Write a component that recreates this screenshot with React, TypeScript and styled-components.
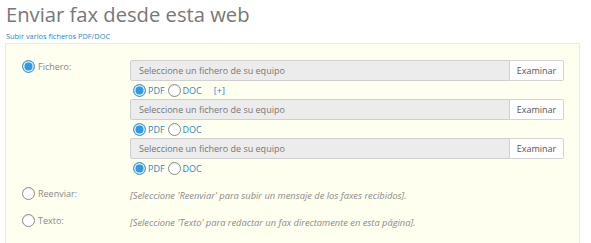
import React from "react";
import styled, { createGlobalStyle } from "styled-components";

const GlobalStyle = createGlobalStyle`
  body {
    margin: 0;
    background: #fff;
    font-family: "Open Sans", "DejaVu Sans", sans-serif;
    overflow: hidden;
  }
`;

const Page = styled.div`
  width: 591px;
  height: 243px;
  overflow: hidden;
`;

const Title = styled.h1`
  margin: 0;
  padding: 0 0 0 6px;
  height: 30px;
  font-size: 20.2px;
  font-weight: 400;
  line-height: 28px;
  color: #777;
`;

const SubLink = styled.a`
  display: block;
  margin-left: 6px;
  height: 12px;
  font-size: 7.4px;
  line-height: 12px;
  color: #1e88c9;
  text-decoration: none;
`;

const Panel = styled.div`
  margin: 1px 0 0 5px;
  width: 575px;
  height: 220px;
  border: 1px solid #ececdc;
  background: #fffff0;
  padding: 16px 0 0 16px;
  box-sizing: border-box;
`;

const OptionRow = styled.div<{ $height?: number }>`
  display: grid;
  grid-template-columns: 108px 434px;
  min-height: ${(p) => p.$height ?? 27}px;
`;

const OptionLabel = styled.label`
  display: flex;
  align-items: flex-start;
  gap: 3px;
  font-size: 9px;
  line-height: 14px;
  color: #888;
`;

const Radio = styled.span<{ $checked?: boolean }>`
  flex: none;
  display: inline-block;
  width: 13px;
  height: 13px;
  border-radius: 50%;
  box-sizing: border-box;
  border: 1px solid ${(p) => (p.$checked ? "#4f95cc" : "#8a8a8a")};
  background: ${(p) => (p.$checked ? "#2f9be6" : "#fff")};
  box-shadow: ${(p) =>
    p.$checked ? "inset 0 0 0 1.5px #d6ecfb" : "inset 0 1px 1px rgba(0,0,0,0.08)"};
`;

const FileGroup = styled.div`
  display: flex;
  flex-direction: column;
`;

const FileInput = styled.div`
  display: flex;
  height: 21px;
`;

const FileBox = styled.div`
  flex: 1;
  display: flex;
  align-items: center;
  padding-left: 8px;
  background: #ececec;
  border: 1px solid #cfcfcf;
  border-radius: 2px 0 0 2px;
  font-size: 9px;
  color: #777;
`;

const BrowseButton = styled.div`
  width: 53px;
  display: flex;
  align-items: center;
  justify-content: center;
  background: #fff;
  border: 1px solid #d4d4d4;
  border-left: none;
  border-radius: 0 2px 2px 0;
  font-size: 9px;
  color: #555;
`;

const FormatLine = styled.div`
  display: flex;
  align-items: center;
  height: 18px;
  padding: 1px 0 0 3px;
  box-sizing: border-box;
  font-size: 9px;
  color: #1e88c9;
`;

const FormatOption = styled.span`
  display: inline-flex;
  align-items: center;
  gap: 2px;
  margin-right: 3px;
`;

const AddMore = styled.span`
  margin-left: 9px;
`;

const Hint = styled.div`
  font-size: 9.3px;
  font-style: italic;
  line-height: 14px;
  padding-top: 2px;
  color: #8a8a8a;
`;

const files = [true, false, false];

export default function App() {
  return (
    <Page>
      <GlobalStyle />
      <Title>Enviar fax desde esta web</Title>
      <SubLink>Subir varios ficheros PDF/DOC</SubLink>
      <Panel>
        <OptionRow $height={127}>
          <OptionLabel>
            <Radio $checked />
            Fichero:
          </OptionLabel>
          <FileGroup>
            {files.map((first, i) => (
              <React.Fragment key={i}>
                <FileInput>
                  <FileBox>Seleccione un fichero de su equipo</FileBox>
                  <BrowseButton>Examinar</BrowseButton>
                </FileInput>
                <FormatLine>
                  <FormatOption>
                    <Radio $checked />
                    PDF
                  </FormatOption>
                  <FormatOption>
                    <Radio />
                    DOC
                  </FormatOption>
                  {first && <AddMore>[+]</AddMore>}
                </FormatLine>
              </React.Fragment>
            ))}
          </FileGroup>
        </OptionRow>
        <OptionRow>
          <OptionLabel>
            <Radio />
            Reenviar:
          </OptionLabel>
          <Hint>[Seleccione 'Reenviar' para subir un mensaje de los faxes recibidos].</Hint>
        </OptionRow>
        <OptionRow>
          <OptionLabel>
            <Radio />
            Texto:
          </OptionLabel>
          <Hint>[Seleccione 'Texto' para redactar un fax directamente en esta página].</Hint>
        </OptionRow>
      </Panel>
    </Page>
  );
}
